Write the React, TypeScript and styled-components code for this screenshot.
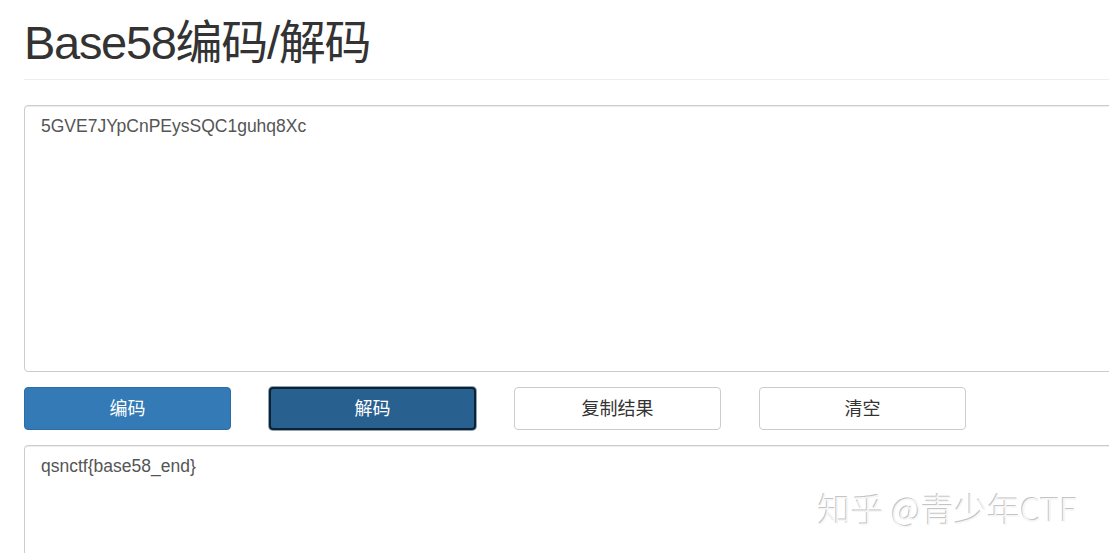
import React from "react";
import styled, { createGlobalStyle } from "styled-components";

const Global = createGlobalStyle`
  html, body { margin: 0; padding: 0; background: #fff; overflow: hidden; }
  body { font-family: "Liberation Sans", Arial, "Noto Sans CJK SC", sans-serif; color: #333; }
`;

const Page = styled.div`
  position: relative;
  width: 1109px;
  height: 553px;
  overflow: hidden;
  padding-left: 24px;
  box-sizing: border-box;
`;

const Inner = styled.div`
  width: 1120px;
`;

const Title = styled.h1`
  margin: 0;
  padding-top: 16px;
  height: 80px;
  box-sizing: border-box;
  font-size: 47px;
  font-weight: 400;
  line-height: 54px;
  letter-spacing: -1.3px;
  color: #333;
  font-family: "Liberation Sans", Arial, "Noto Sans CJK SC", sans-serif;
  border-bottom: 1px solid #eee;
`;

const Area = styled.div<{ $h: number; $mt?: number }>`
  margin-top: ${(p) => p.$mt ?? 0}px;
  height: ${(p) => p.$h}px;
  box-sizing: border-box;
  border: 1px solid #ccc;
  border-radius: 4px;
  padding: 9px 16px;
  font-size: 17.5px;
  line-height: 22px;
  color: #555;
  box-shadow: inset 0 1px 1px rgba(0, 0, 0, 0.075);
`;

const Row = styled.div`
  display: flex;
  gap: 38px;
  margin: 15px 0 15px;
`;

const Btn = styled.button<{ $variant: "primary" | "active" | "default" }>`
  width: 207px;
  height: 43px;
  box-sizing: border-box;
  border-radius: 4px;
  font-size: 18px;
  line-height: 20px;
  font-family: "Noto Sans CJK SC", sans-serif;
  cursor: pointer;
  padding: 0 0 3px;
  ${(p) =>
    p.$variant === "primary"
      ? `background:#337ab7;color:#fff;border:1px solid #2e6da4;`
      : p.$variant === "active"
      ? `background:#286090;color:#fff;border:2px solid #0e2236;box-shadow:0 0 0 1px #8fa2b5;`
      : `background:#fff;color:#333;border:1px solid #ccc;`}
`;

const Watermark = styled.div`
  position: absolute;
  left: 818px;
  top: 484px;
  font-size: 33px;
  font-weight: 300;
  color: #f6f6f6;
  font-family: "Noto Sans CJK SC", sans-serif;
  text-shadow: -1px -1px 0 #c4c4c4, 1px 1px 0 #fff;
  white-space: nowrap;
`;

export default function App() {
  return (
    <Page>
      <Global />
      <Inner>
        <Title>Base58编码/解码</Title>
        <Area $h={267} $mt={25}>5GVE7JYpCnPEysSQC1guhq8Xc</Area>
        <Row>
          <Btn $variant="primary">编码</Btn>
          <Btn $variant="active">解码</Btn>
          <Btn $variant="default">复制结果</Btn>
          <Btn $variant="default">清空</Btn>
        </Row>
        <Area $h={200}>qsnctf{"{"}base58_end{"}"}</Area>
      </Inner>
      <Watermark>知乎 @青少年CTF</Watermark>
    </Page>
  );
}
